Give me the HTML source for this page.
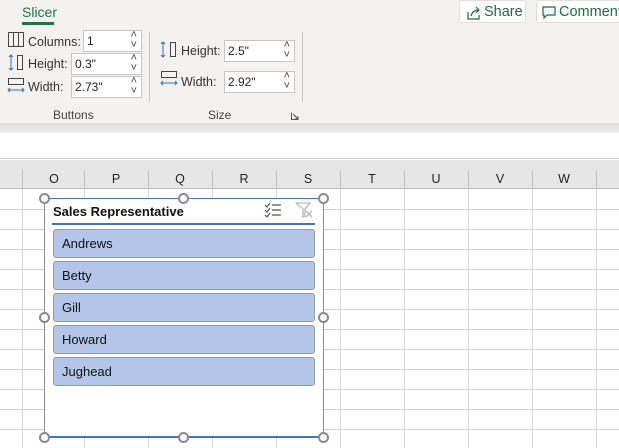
<!DOCTYPE html>
<html><head><style>
*{margin:0;padding:0;box-sizing:border-box}
body{width:619px;height:448px;overflow:hidden;background:#fff;font-family:"Liberation Sans",sans-serif;position:relative;font-size:12px;color:#333}
.a{position:absolute}
.in{position:absolute;background:#fff;border:1px solid #c8c6c4;height:22px;font-size:12px;padding:3px 0 0 3px;color:#222}
.in:after{content:"˄\A˅";white-space:pre;position:absolute;right:4px;top:-1px;font-size:11px;line-height:10px;color:#444}
.lbl{position:absolute;font-size:12.5px;color:#333}
.item{position:absolute;left:53px;width:262px;height:29px;background:#b4c6e7;border:1px solid #9a9a9a;border-radius:3px;font-size:13px;color:#111;padding:6px 0 0 8px}
.h{position:absolute;width:11px;height:11px;border:2px solid #8a8a8a;border-radius:50%;background:#fff}
.col{position:absolute;top:162px;height:27px;width:64px;text-align:center;font-size:12.5px;padding-top:10px;color:#222}
</style></head><body>
<div class="a" style="left:0;top:0;width:619px;height:123px;background:#f3f2f1"></div>
<div class="a" style="left:0;top:123px;width:619px;height:10px;background:linear-gradient(#dcdcdc,#ececec)"></div>
<div class="a" style="left:0;top:133px;width:619px;height:26px;background:#fff;border-bottom:1px solid #d4d4d4"></div>
<div class="a" style="left:22px;top:4px;font-size:14px;color:#217346">Slicer</div>
<div class="a" style="left:22px;top:22px;width:32px;height:3px;background:#217346"></div>
<div class="a" style="left:459px;top:0;width:67px;height:23px;background:#fff;border:1px solid #e1dfdd;border-radius:3px;color:#1e6b41;font-size:14.5px;padding:3px 0 0 24px">Share</div>
<svg class="a" style="left:466px;top:5px" width="16" height="16" viewBox="0 0 16 16" fill="none" stroke="#1e6b41" stroke-width="1.2"><path d="M2 7v7h11v-4M5 11c1-4 4-6 8-6M10 2l3 3-3 3"/></svg>
<div class="a" style="left:536px;top:0;width:90px;height:23px;background:#fff;border:1px solid #e1dfdd;border-radius:3px;color:#1e6b41;font-size:14.5px;padding:3px 0 0 22px">Comment</div>
<svg class="a" style="left:542px;top:6px" width="14" height="14" viewBox="0 0 14 14" fill="none" stroke="#1e6b41" stroke-width="1.2"><path d="M1 1h12v8H5l-3 3V9H1z"/></svg>
<svg class="a" style="left:8px;top:32px" width="16" height="16" fill="none" stroke="#444"><rect x="0.5" y="0.5" width="15" height="14"/><path d="M5.5 1v14M10.5 1v14"/></svg>
<div class="lbl" style="left:28px;top:35px">Columns:</div>
<div class="in" style="left:83px;top:30px;width:59px">1</div>
<svg class="a" style="left:8px;top:54px" width="16" height="18" fill="none"><path d="M3 1v15M1 3l2-2 2 2M1 14l2 2 2-2" stroke="#2e75b6"/><rect x="9.5" y="1.5" width="5" height="14" stroke="#444"/></svg>
<div class="lbl" style="left:28px;top:57px">Height:</div>
<div class="in" style="left:71px;top:53px;width:71px">0.3"</div>
<svg class="a" style="left:7px;top:78px" width="18" height="16" fill="none"><rect x="1.5" y="0.5" width="15" height="6" stroke="#444"/><path d="M1 12h16M3 10l-2 2 2 2M15 10l2 2-2 2" stroke="#2e75b6"/></svg>
<div class="lbl" style="left:28px;top:80px">Width:</div>
<div class="in" style="left:71px;top:76px;width:71px">2.73"</div>
<div class="a" style="left:53px;top:108px;font-size:12px;color:#444">Buttons</div>
<div class="a" style="left:149px;top:32px;width:1px;height:70px;background:#c8c6c4"></div>
<svg class="a" style="left:160px;top:41px" width="18" height="18" fill="none"><path d="M3 1v15M1 3l2-2 2 2M1 14l2 2 2-2" stroke="#2e75b6"/><rect x="10.5" y="1.5" width="5" height="14" stroke="#444"/></svg>
<div class="lbl" style="left:181px;top:44px">Height:</div>
<div class="in" style="left:224px;top:40px;width:71px">2.5"</div>
<svg class="a" style="left:160px;top:71px" width="18" height="16" fill="none"><rect x="1.5" y="0.5" width="15" height="6" stroke="#444"/><path d="M1 12h16M3 10l-2 2 2 2M15 10l2 2-2 2" stroke="#2e75b6"/></svg>
<div class="lbl" style="left:181px;top:75px">Width:</div>
<div class="in" style="left:224px;top:71px;width:71px">2.92"</div>
<div class="a" style="left:208px;top:108px;font-size:12px;color:#444">Size</div>
<svg class="a" style="left:291px;top:112px" width="8" height="8" fill="none" stroke="#555"><path d="M0.5 0.5v7h7M2 2l5 5M4 7h3V4"/></svg>
<div class="a" style="left:302px;top:32px;width:1px;height:70px;background:#c8c6c4"></div>
<div class="a" style="left:0;top:160px;width:619px;height:29px;background:#e6e6e6;border-bottom:1px solid #bdbdbd"></div>
<svg class="a" style="left:0;top:160px" width="619" height="288">
<g stroke="#d4d4d4"><path d="M0 49.5h619M0 69.5h619M0 89.5h619M0 109.5h619M0 129.5h619M0 149.5h619M0 169.5h619M0 189.5h619M0 209.5h619M0 229.5h619M0 249.5h619M0 269.5h619"/>
<path d="M22.5 29v259M84.5 29v259M148.5 29v259M212.5 29v259M276.5 29v259M340.5 29v259M404.5 29v259M468.5 29v259M532.5 29v259M596.5 29v259"/></g>
<g stroke="#c0c0c0"><path d="M22.5 10v19M84.5 10v19M148.5 10v19M212.5 10v19M276.5 10v19M340.5 10v19M404.5 10v19M468.5 10v19M532.5 10v19M596.5 10v19"/></g>
</svg>
<div class="col" style="left:22px">O</div><div class="col" style="left:84px">P</div><div class="col" style="left:148px">Q</div><div class="col" style="left:212px">R</div><div class="col" style="left:276px">S</div><div class="col" style="left:340px">T</div><div class="col" style="left:404px">U</div><div class="col" style="left:468px">V</div><div class="col" style="left:532px">W</div>
<div class="a" style="left:44px;top:198px;width:280px;height:240px;background:#fff;border:1px solid #8e8e8e;border-top-color:#4472c4;border-bottom:2px solid #4472c4"></div>
<div class="a" style="left:53px;top:204px;font-size:13px;font-weight:bold;color:#111">Sales Representative</div>
<svg class="a" style="left:264px;top:202px" width="18" height="16" fill="none" stroke="#555" stroke-width="1.2"><path d="M1 3l2 2 3-4M1 8l2 2 3-4M1 13l2 2 3-4M8 3h9M8 8h9M8 13h9"/></svg>
<svg class="a" style="left:295px;top:202px" width="18" height="16" fill="none" stroke="#aaa" stroke-width="1.1"><path d="M1 1h14l-5 6v7l-2 1V7zM11 9l6 6M17 9l-6 6"/></svg>
<div class="a" style="left:52px;top:223px;width:263px;height:2px;background:#4472c4"></div>
<div class="item" style="top:229px">Andrews</div>
<div class="item" style="top:261px">Betty</div>
<div class="item" style="top:293px">Gill</div>
<div class="item" style="top:325px">Howard</div>
<div class="item" style="top:357px">Jughead</div>
<div class="h" style="left:39px;top:193px"></div><div class="h" style="left:178px;top:193px"></div><div class="h" style="left:318px;top:193px"></div>
<div class="h" style="left:39px;top:312px"></div><div class="h" style="left:318px;top:312px"></div>
<div class="h" style="left:39px;top:432px"></div><div class="h" style="left:178px;top:432px"></div><div class="h" style="left:318px;top:432px"></div>
</body></html>
